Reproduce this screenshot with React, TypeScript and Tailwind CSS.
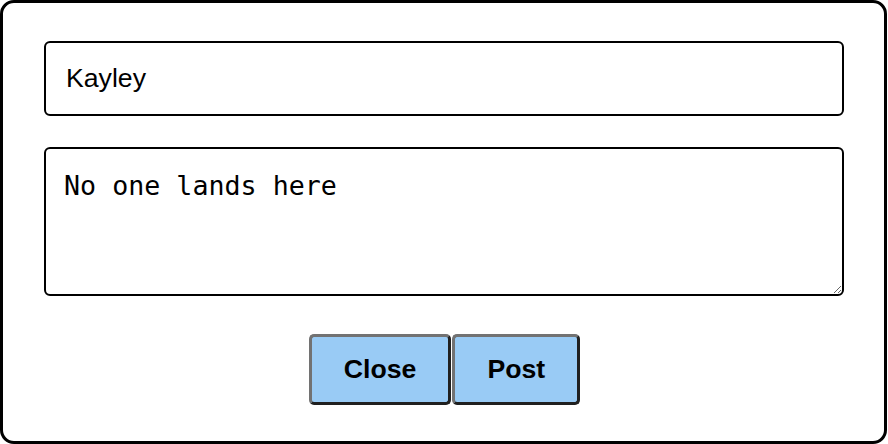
import { useState } from "react";

export default function App() {
  const [name, setName] = useState("Kayley");
  const [body, setBody] = useState("No one lands here");

  return (
    <div className="h-[444px] w-[888px] bg-white">
      <div className="flex h-[444px] w-[887px] flex-col rounded-[14px] border-[3px] border-black pl-[41px] pr-[40px] pt-[38px]">
        <input
          value={name}
          onChange={(e) => setName(e.target.value)}
          className="h-[75px] w-[800px] rounded-[6px] border-2 border-black px-[20px] text-[26.67px] text-black outline-none"
          style={{ fontFamily: '"Liberation Sans", Arial, sans-serif' }}
        />
        <textarea
          value={body}
          onChange={(e) => setBody(e.target.value)}
          className="mt-[31px] h-[149px] w-[800px] rounded-[6px] border-2 border-black pl-[18px] pt-[17px] text-[26.67px] text-black outline-none"
          style={{ fontFamily: '"DejaVu Sans Mono", monospace' }}
        />
        <div className="mt-[38px] flex justify-center gap-[1px] pl-[1px]">
          {["Close", "Post"].map((label) => (
            <button
              key={label}
              className="rounded-[5px] border-[3px] border-t-[#727272] border-l-[#727272] border-r-[#202020] border-b-[#202020] bg-[#99cbf5] px-[32px] py-[17px] text-[26.67px] font-bold leading-[30.67px] text-black"
              style={{ fontFamily: '"Liberation Sans", Arial, sans-serif' }}
            >
              {label}
            </button>
          ))}
        </div>
      </div>
    </div>
  );
}
